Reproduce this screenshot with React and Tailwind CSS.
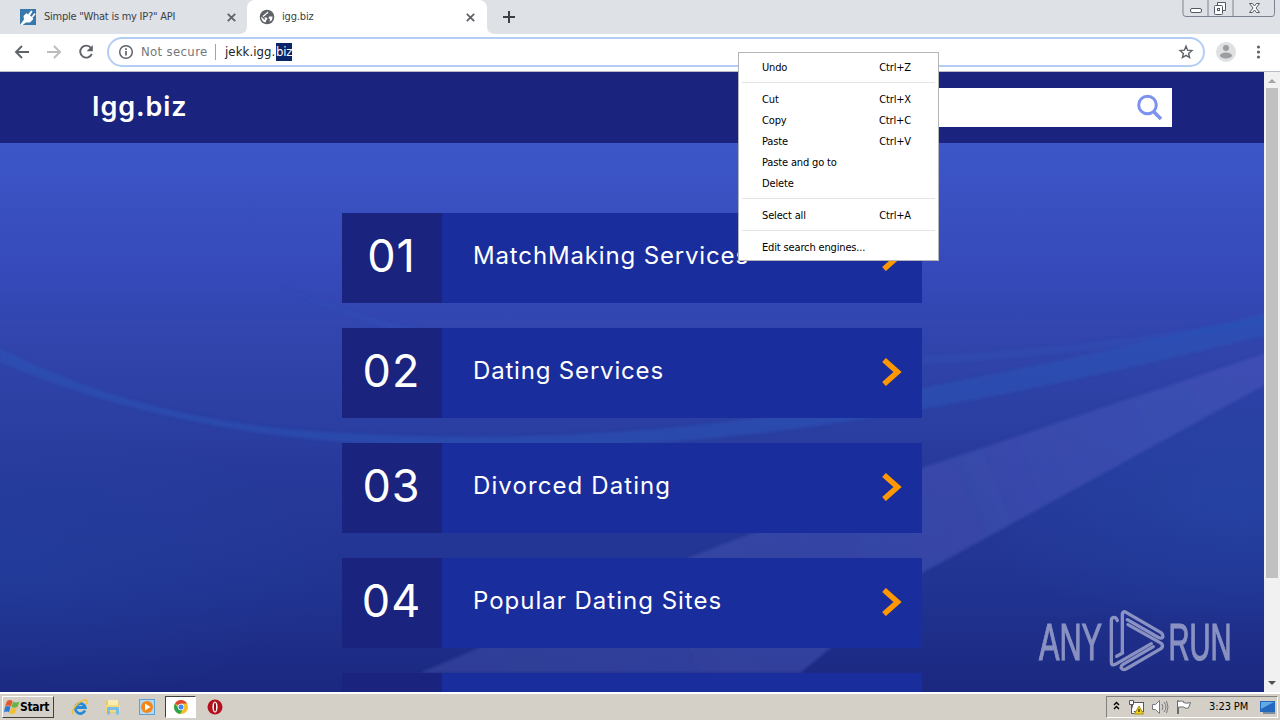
import React from "react";

const UI = "font-['DejaVu_Sans_Condensed','DejaVu_Sans',sans-serif]";

function Close({ className }) {
  return (
    <svg className={className} width="9" height="9" viewBox="0 0 9 9" stroke="#5f6368" strokeWidth="1.8">
      <path d="M.8.8l7.4 7.4M8.2.8L.8 8.2" />
    </svg>
  );
}

function TabStrip() {
  return (
    <div className="relative flex h-[34px] shrink-0 items-start bg-[#dee1e6] text-[11px] text-[#3c4043]">
      <div className="flex h-[34px] w-[247px] items-center pl-5">
        <svg width="16" height="16" viewBox="0 0 16 16">
          <rect width="16" height="16" fill="#3779ad" />
          <path d="M0 16L4 10.500 3.500 7l3-3 1.500 1.500 3-4 1.600 1-2.600 4 1.500 1.200L14.400 4l1.200 1.500-3.200 3.200 1 1.300L10 13.500H6L2.500 16z" fill="#fff" />
        </svg>
        <span className="ml-2 w-[183px] pt-px tracking-[-0.25px] whitespace-nowrap">Simple "What is my IP?" API</span>
        <Close className="" />
      </div>
      <div className="relative flex h-[34px] w-[240px] items-center rounded-t-[8px] bg-white pl-3">
        <svg width="16" height="16" viewBox="0 0 16 16">
          <circle cx="8" cy="8" r="7.300" fill="#5f6368" />
          <path d="M9 2.600C10 4 8.500 5 7 5.500c-.5 1.500-1 1.500-2 1.500-.5 1 0 1.500 2 1.500 1.500 0 1.500 1.500 1 2-1 .5-1 2-1.500 3C3.500 12.700 2 10.500 2.200 7.500L4.500 10 6 11V9.500L3.500 7z" fill="#fff" />
          <path d="M13.600 7.500l-.6 3.500-2.500 1.800.5-2.600-1.500-1.200.5-1.500z" fill="#fff" />
        </svg>
        <span className="ml-[7px] w-[184px] pt-px tracking-[-0.15px]">igg.biz</span>
        <Close className="" />
        <svg className="absolute bottom-0 -left-2" width="8" height="8"><path d="M8 0v8H0Q8 8 8 0" fill="#fff" /></svg>
        <svg className="absolute -right-2 bottom-0" width="8" height="8"><path d="M0 0v8h8Q0 8 0 0" fill="#fff" /></svg>
      </div>
      <svg className="mt-[11px] ml-4" width="12" height="12" stroke="#3c4043" strokeWidth="2"><path d="M6 0v12M0 6h12" /></svg>
      <svg className="absolute top-0 right-1" width="94" height="18" viewBox="0 0 94 18" fill="none" stroke="#7c8390">
        <path d="M1.500 -1v14.500q0 3 3 3h86q2.500 0 2.500-3V-1M26.500 0v16M51.500 0v16" transform="translate(-.5 0)" />
        <rect x="8.500" y="8.500" width="11" height="4" rx="1.500" stroke="#555b66" fill="#fff" />
        <path d="M35.500 5V2.500h8v8H41" stroke="#555b66" fill="#fff" />
        <rect x="32.500" y="5.500" width="8" height="9" rx="1" stroke="#555b66" fill="#fff" />
        <rect x="35.500" y="8.500" width="2" height="2" stroke="#555b66" />
        <path d="M67.500 3.500h3l2 2.500 2-2.500h3L74 8l3.500 4.500h-3l-2-2.500-2 2.500h-3L71 8z" stroke="#555b66" fill="#fff" />
      </svg>
    </div>
  );
}

function Toolbar() {
  return (
    <div className="flex h-[38px] shrink-0 items-center border-b border-[#b8bcc6] bg-white pb-px pl-[14px]">
      <svg width="16" height="14" viewBox="0 0 16 14" fill="none" stroke="#5f6368" strokeWidth="1.900"><path d="M15 7H2M8 1L2 7l6 6" /></svg>
      <svg className="ml-4" width="16" height="14" viewBox="0 0 16 14" fill="none" stroke="#babcbe" strokeWidth="1.900"><path d="M1 7h13M8 1l6 6-6 6" /></svg>
      <svg className="ml-4" width="16" height="16" viewBox="0 0 16 16" fill="none" stroke="#5f6368" strokeWidth="1.900">
        <path d="M13 4A6 6 0 1 0 13.800 9.800" /><path d="M14.800 1v6.200H8.600z" fill="#5f6368" stroke="none" />
      </svg>
      <div className="ml-[13px] flex h-[30px] w-[1098px] items-center rounded-full border-2 border-[#b3cdf3] pl-[9px]">
        <svg width="16" height="16" viewBox="0 0 16 16" fill="none" stroke="#5f6368" strokeWidth="1.500"><circle cx="8" cy="8" r="6.300" /><path d="M8 7v4.500M8 4.300v1.600" strokeWidth="1.700" /></svg>
        <span className="ml-[7px] w-[74px] text-[13px] tracking-[0.35px] whitespace-nowrap text-[#73777c]">Not secure</span>
        <span className="h-4 w-px bg-[#a0a3a8]" />
        <span className="ml-[9px] w-[51px] text-[13px] tracking-[0.1px] whitespace-nowrap text-[#202124]">jekk.igg.</span>
        <span className="h-[18px] w-4 bg-[#0a246a] text-[13px] leading-[18px] tracking-[-0.2px] text-white">biz</span>
        <svg className="mr-[9px] ml-auto" width="16" height="16" viewBox="0 0 16 16" fill="none" stroke="#5f6368" strokeWidth="1.400"><path d="M8 2.200l1.600 4 4.300.4-3.300 2.800 1 4.200L8 11.400l-3.600 2.200 1-4.200-3.300-2.800 4.300-.4z" /></svg>
      </div>
      <svg className="ml-[11px]" width="20" height="20" viewBox="0 0 20 20"><circle cx="10" cy="10" r="10" fill="#dfe0e2" /><circle cx="10" cy="6" r="3" fill="#9b9da0" /><ellipse cx="10" cy="13.500" rx="6" ry="3" fill="#9b9da0" /></svg>
      <svg className="ml-[20px]" width="5" height="14" fill="#5f6368"><circle cx="2.500" cy="2" r="1.600" /><circle cx="2.500" cy="7" r="1.600" /><circle cx="2.500" cy="12" r="1.600" /></svg>
    </div>
  );
}

function Backdrop() {
  return (
    <svg className="absolute inset-0" width="1264" height="549" viewBox="0 143 1264 549" preserveAspectRatio="none">
      <defs>
        <linearGradient id="sky" x1="0" y1="0" x2="0" y2="1">
          <stop offset="0" stopColor="#3d57c8" /><stop offset=".22" stopColor="#364abb" /><stop offset=".4" stopColor="#3043a9" />
          <stop offset=".6" stopColor="#273a9b" /><stop offset=".8" stopColor="#213492" /><stop offset="1" stopColor="#1b2880" />
        </linearGradient>
        <linearGradient id="beam" gradientUnits="userSpaceOnUse" x1="1264" y1="370" x2="500" y2="680">
          <stop offset="0" stopColor="#4252b8" stopOpacity=".7" /><stop offset="1" stopColor="#3c4aa4" stopOpacity=".6" />
        </linearGradient>
        <radialGradient id="glow"><stop offset="0" stopColor="#2448a8" stopOpacity=".6" /><stop offset="1" stopColor="#2448a8" stopOpacity="0" /></radialGradient>
        <filter id="soft"><feGaussianBlur stdDeviation="1.5" /></filter>
      </defs>
      <rect y="143" width="1264" height="549" fill="url(#sky)" />
      <ellipse cx="1240" cy="500" rx="270" ry="130" fill="url(#glow)" />
      <ellipse cx="0" cy="560" rx="330" ry="150" fill="url(#glow)" opacity=".55" />
      <g filter="url(#soft)">
        <path d="M0 348Q150 425 345 433Q650 450 922 388Q1120 350 1270 312V334Q1080 382 922 409Q630 463 345 442Q150 427 0 362Z" fill="#2855b9" opacity=".5" />
        <path d="M280 285Q400 340 620 358Q980 370 1270 316V322Q980 380 620 366Q400 350 280 285Z" fill="#2855b9" opacity=".3" />
        <path d="M1270 352L922 468L690 557L420 673H800L922 573L1270 382Z" fill="url(#beam)" />
      </g>
    </svg>
  );
}

const services = [
  ["01", "MatchMaking Services", "tracking-[0.85px]"],
  ["02", "Dating Services", "tracking-[0.82px]"],
  ["03", "Divorced Dating", "tracking-[1.1px]"],
  ["04", "Popular Dating Sites", "tracking-[1px]"],
  ["05", "", ""],
];

function Services() {
  return (
    <div className="relative mx-auto flex w-[580px] flex-col gap-[25px] pt-[70px]">
      {services.map(([num, label, track]) => (
        <div key={num} className="flex h-[90px] shrink-0 items-center bg-[#1a2d9c] text-white">
          <div className="flex h-full w-[100px] items-center justify-center bg-[#1a237e] pr-px pb-[4px] text-[45px]">
            <span className="tracking-[1px]">{label ? num : ""}</span>
          </div>
          <span className={`ml-[31px] pb-[5px] text-[24px] whitespace-nowrap ${track}`}>{label}</span>
          {label && (
            <svg className="mr-5 mb-[2px] ml-auto" width="20" height="28" viewBox="0 0 20 28" fill="none" stroke="#ff9800" strokeWidth="5.500"><path d="M2 2l13.500 12L2 26" /></svg>
          )}
        </div>
      ))}
    </div>
  );
}

function Watermark() {
  return (
    <svg className="absolute right-[22px] bottom-[8px]" width="214" height="86" viewBox="1028 598 214 86" fill="#fff" opacity=".48">
      <g className="font-['Liberation_Sans',sans-serif]" fontSize="52" stroke="#fff" strokeWidth="1.200">
        <text transform="translate(1039 659.5) scale(.59 1)">ANY</text>
        <text transform="translate(1168.5 659.5) scale(.56 1)">RUN</text>
      </g>
      <g transform="translate(1100 604) scale(.3333)" fill="none" stroke="#fff" strokeWidth="10" strokeLinejoin="round" strokeLinecap="round">
        <path d="M52 50Q50 40 42 40Q34 40 34 50V174Q34 187 46 181L154 119M50 157L68 147" />
        <path d="M67 146V30Q68 20 78 25L183 86Q191 92 188 100Q183 105 174 100L82 47" />
        <path d="M84 62L184 118Q191 125 184 133L78 195Q67 200 63 191Q63 185 69 181L160 128" />
      </g>
    </svg>
  );
}

function Page() {
  return (
    <div className="flex h-[620px] shrink-0">
      <div className="relative flex w-[1264px] flex-col overflow-hidden font-[Inter,sans-serif]">
        <header className="flex h-[71px] shrink-0 items-center justify-between bg-[#1a237e] pr-[92px] pl-[92px]">
          <span className="pb-px text-[27px] font-semibold tracking-[0.9px] text-white">Igg.biz</span>
          <div className="flex h-[39px] w-[330px] items-center justify-end bg-white pr-[9px]">
            <svg width="27" height="27" viewBox="0 0 27 27" fill="none" stroke="#7b92ee" strokeWidth="3"><circle cx="11.500" cy="11" r="8.800" /><path d="M17.500 17.500l7.500 7.500" strokeWidth="3.600" /></svg>
          </div>
        </header>
        <main className="relative h-[549px] overflow-hidden"><Backdrop /><Services /></main>
        <Watermark />
      </div>
      <div className="flex w-4 flex-col items-center bg-[#f1f1f1]">
        <svg className="h-4 shrink-0" width="8" height="16" fill="#a3a3a3"><path d="M0 11l4-4 4 4z" /></svg>
        <div className="h-[490px] w-3 bg-[#c1c1c1]" />
        <svg className="mt-auto" width="8" height="18" fill="#505050"><path d="M0 7h8l-4 4z" /></svg>
      </div>
    </div>
  );
}

const menu = [
  [["Undo", "Ctrl+Z"]],
  [["Cut", "Ctrl+X"], ["Copy", "Ctrl+C"], ["Paste", "Ctrl+V"], ["Paste and go to", ""], ["Delete", ""]],
  [["Select all", "Ctrl+A"]],
  [["Edit search engines...", ""]],
];

function ContextMenu() {
  return (
    <div className="absolute top-[52px] left-[738px] h-[209px] w-[201px] divide-y divide-[#e4e4e6] border border-[#b4b5bb] bg-white px-[3px] text-[11px] tracking-[-0.15px] text-black">
      {menu.map((group, i) => (
        <div key={i} className={i === 0 ? "pt-[5px] pb-[3px]" : "pt-[7px] pb-[3px]"}>
          {group.map(([label, key]) => (
            <div key={label} className="flex h-[21px] items-center justify-between pr-[24px] pl-5"><span>{label}</span><span>{key}</span></div>
          ))}
        </div>
      ))}
    </div>
  );
}

function Taskbar() {
  return (
    <div className="flex h-7 shrink-0 items-center border-t-2 border-white bg-[#d4d0c8]">
      <div className="ml-[2px] flex h-[22px] w-[52px] items-center border border-t-white border-r-[#404040] border-b-[#404040] border-l-white pl-px">
        <svg width="16" height="16" viewBox="0 0 16 16"><path d="M3 2q3-2 5.500 0L7 7.500Q4 5.500 1 7.500z" fill="#e4572c" /><path d="M9 2.500q3 2 6.500 0l-2 5.500q-3 1.500-6 0z" fill="#67b346" /><path d="M1 8q3-2 5.500 0L5 13.500q-2-2-5 0z" fill="#2d7bcf" /><path d="M7.500 8.500q2.500 2 5.500 0l-2 5.500q-3 2-5.500 0z" fill="#f7be2c" /></svg>
        <span className="text-[12px] font-bold tracking-[-0.3px] text-black">Start</span>
      </div>
      <svg className="ml-[18px]" width="16" height="16" viewBox="0 0 16 16" fill="none"><path d="M13 11.500A5 5 0 1 1 13.300 8.500H4" stroke="#258bd8" strokeWidth="2.800" /><path d="M1 15C-2 11 9 0 14 1c2 .5 1 3 0 4" stroke="#efc038" strokeWidth="1.500" /></svg>
      <svg className="ml-[17px]" width="16" height="16" viewBox="0 0 16 16"><path d="M1 2h5l1 2h7v10H1z" fill="#e9c966" /><path d="M3 1h10v6H3z" fill="#f7edae" /><path d="M1 6h14v7H1z" fill="#f4da81" /><path d="M2 15.500V9q0-1 1-1h10q1 0 1 1v6.500h-3V11H5v4.500z" fill="#78bfe8" /></svg>
      <svg className="ml-[18px]" width="16" height="16" viewBox="0 0 16 16"><rect x=".5" y=".5" width="15" height="15" fill="#b5d8f2" stroke="#5e9fd5" /><circle cx="8" cy="8" r="6" fill="#f38818" /><path d="M6 4.500L11.500 8 6 11.500z" fill="#fff" /></svg>
      <div className="ml-[10px] flex h-[22px] w-[31px] items-center justify-center border border-t-[#404040] border-r-white border-b-white border-l-[#404040] bg-white">
        <svg width="14" height="14" viewBox="0 0 14 14"><circle cx="7" cy="7" r="7" fill="#f3bf28" /><path d="M7 7L1 3.500A7 7 0 0 1 13 3.500H7z" fill="#dd4436" /><path d="M1 3.500A7 7 0 0 0 6 14l3.500-6H4z" fill="#2ba24c" /><circle cx="7" cy="7" r="3.200" fill="#fff" /><circle cx="7" cy="7" r="2.500" fill="#4285f4" /></svg>
      </div>
      <svg className="ml-[11px]" width="16" height="16" viewBox="0 0 16 16"><circle cx="8" cy="8" r="7.500" fill="#b3121d" /><ellipse cx="8" cy="8" rx="2.600" ry="5.500" fill="#fff" /><ellipse cx="8" cy="8" rx="1.100" ry="4.500" fill="#970d18" /></svg>
      <div className="mr-[2px] ml-auto flex h-[22px] w-[172px] items-center border border-t-[#808080] border-r-white border-b-white border-l-[#808080] pl-[6px]">
        <svg className="mb-[3px]" width="7" height="9" fill="none" stroke="#000" strokeWidth="1.400"><path d="M1 4l2.500-2.500L6 4M1 8l2.500-2.500L6 8" /></svg>
        <svg className="ml-[8px]" width="16" height="16" viewBox="0 0 16 16" fill="#fff" stroke="#55585d"><rect x="4.500" y="3.500" width="11" height="9" /><path d="M1.500 1.500h4v4h-4zM3.500 5.500v9h3" /><path d="M11 7l4.500 8h-9z" fill="#f2d21c" stroke="#a99117" /><path d="M11 10v3" stroke="#000" /></svg>
        <svg className="ml-2" width="17" height="16" viewBox="0 0 17 16" fill="none" stroke="#777a80"><path d="M.5 5.500h3l4-4v13l-4-4h-3z" fill="#fff" /><path d="M10 5q2 3 0 6M12 3q4 5 0 10M14.500 2q3 6 0 12" /></svg>
        <svg className="ml-[7px]" width="16" height="16" viewBox="0 0 16 16" fill="#fff" stroke="#696c71"><path d="M1.500 15V1.500h1v1q3-1 5 0v1q3 1.500 7 0l-2 5.500q-3 1-5-1H2.500v7" /></svg>
        <span className="ml-[17px] w-[43px] pt-px text-[11px] tracking-[-0.1px] whitespace-nowrap text-black">3:23 PM</span>
        <svg className="ml-[8px]" width="16" height="14" viewBox="0 0 16 14"><path d="M0 1h15v11H0z" fill="#2469bd" /><path d="M1 2h13L1 9z" fill="#63a9e3" /><path d="M3 13h12" stroke="#264b78" /></svg>
      </div>
    </div>
  );
}

export default function App() {
  return (
    <div className={`relative flex h-[720px] w-[1280px] flex-col overflow-hidden ${UI}`}>
      <TabStrip />
      <Toolbar />
      <Page />
      <Taskbar />
      <ContextMenu />
    </div>
  );
}
